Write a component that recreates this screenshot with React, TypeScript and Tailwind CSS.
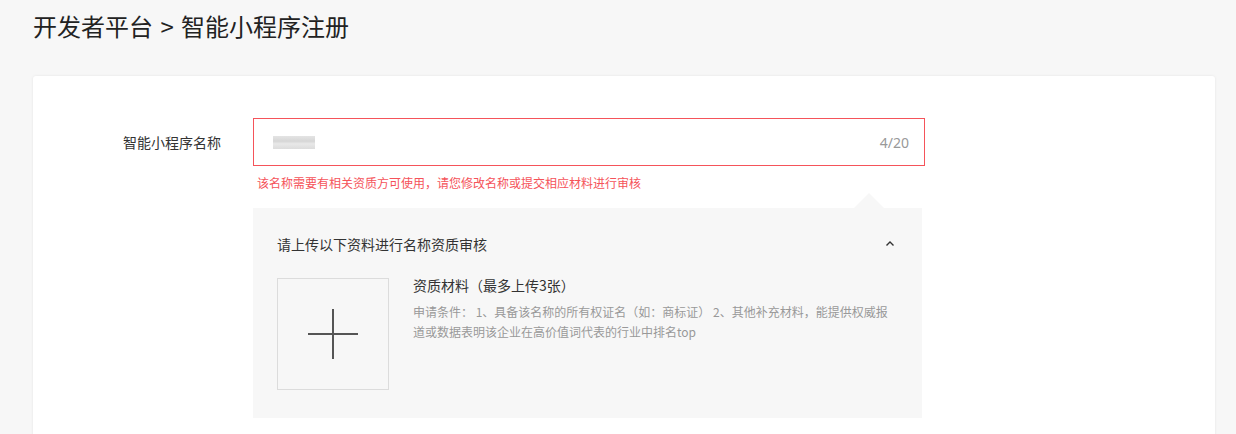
export default function App() {
  return (
    <div
      className="h-[434px] overflow-hidden bg-[#f7f7f7] px-[33px] pt-[9px] text-[#333]"
      style={{ fontFamily: '"Noto Sans CJK SC", "Noto Sans", sans-serif' }}
    >
      <h1 className="text-[24px] leading-[34px] font-normal text-[#222]">
        开发者平台 <span className="mx-[2px]">&gt;</span> 智能小程序注册
      </h1>

      <div className="mt-[33px] h-[400px] w-[1182px] rounded-[3px] bg-white pt-[42px] shadow-[0_0_3px_rgba(0,0,0,0.08)]">
        <div className="flex">
          <div className="w-[188px] pt-[13px] text-right text-[14px] leading-[22px] text-[#333]">
            智能小程序名称
          </div>
          <div className="ml-[32px] w-[672px]">
            <div className="flex h-[48px] items-center justify-between border border-[#f5535a] pl-[19px] pr-[15px]">
              <div className="h-[13px] w-[42px] bg-[linear-gradient(180deg,#e4e4e4,#d6d6d6_40%,#e8e8e8_60%,#dcdcdc)] blur-[0.6px]" />
              <span
                className="text-[14px] text-[#999]"
                style={{ fontFamily: '"Noto Sans", sans-serif' }}
              >
                4/20
              </span>
            </div>
            <div className="mt-[8px] pl-[4px] text-[12px] leading-[17px] text-[#f5535a]">
              该名称需要有相关资质方可使用，请您修改名称或提交相应材料进行审核
            </div>

            <div className="relative mt-[17px] h-[210px] w-[669px] bg-[#f7f7f7] px-[24px] pt-[25px]">
              <div className="absolute -top-[15px] right-[38px] h-0 w-0 border-x-[15px] border-b-[15px] border-x-transparent border-b-[#f7f7f7]" />
              <div className="flex items-center justify-between">
                <span className="text-[14px] leading-[22px] text-[#333]">
                  请上传以下资料进行名称资质审核
                </span>
                <svg width="10" height="8" viewBox="0 0 10 8" className="mr-[3px]">
                  <path d="M1.5 5.5 L5 2 L8.5 5.5" fill="none" stroke="#333" strokeWidth="1.4" />
                </svg>
              </div>
              <div className="mt-[23px] flex">
                <div className="flex h-[112px] w-[112px] shrink-0 items-center justify-center border border-[#dcdcdc]">
                  <svg width="52" height="52" viewBox="0 0 52 52">
                    <path d="M26 1 V51 M1 26 H51" stroke="#555" strokeWidth="2" />
                  </svg>
                </div>
                <div className="ml-[24px] -mt-[3px]">
                  <div className="text-[14px] leading-[20px] text-[#333]">
                    资质材料（最多上传3张）
                  </div>
                  <div className="mt-[7px] w-[480px] text-[12px] leading-[20px] text-[#999]">
                    申请条件： 1、具备该名称的所有权证名（如：商标证） 2、其他补充材料，能提供权威报道或数据表明该企业在高价值词代表的行业中排名top
                  </div>
                </div>
              </div>
            </div>
          </div>
        </div>
      </div>
    </div>
  );
}
